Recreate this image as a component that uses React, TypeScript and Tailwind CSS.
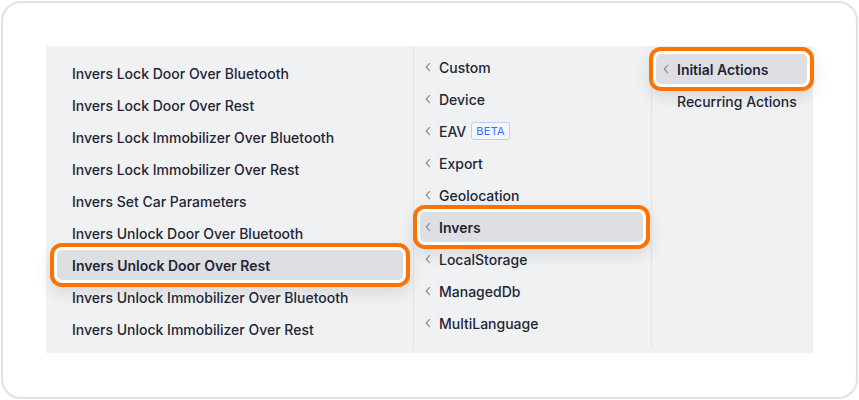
import React from "react";

const ring =
  "bg-[#dedfe3] font-semibold shadow-[0_0_0_3px_#ffffff,0_0_0_7px_#ff7200,0_6px_16px_7px_rgba(0,0,0,0.10)]";

const actions = [
  "Invers Lock Door Over Bluetooth",
  "Invers Lock Door Over Rest",
  "Invers Lock Immobilizer Over Bluetooth",
  "Invers Lock Immobilizer Over Rest",
  "Invers Set Car Parameters",
  "Invers Unlock Door Over Bluetooth",
  "Invers Unlock Door Over Rest",
  "Invers Unlock Immobilizer Over Bluetooth",
  "Invers Unlock Immobilizer Over Rest",
];

const groups = [
  "Custom",
  "Device",
  "EAV",
  "Export",
  "Geolocation",
  "Invers",
  "LocalStorage",
  "ManagedDb",
  "MultiLanguage",
];

function Chevron() {
  return (
    <svg width="6" height="10" viewBox="0 0 6 10" className="shrink-0">
      <polyline
        points="4.6,1.4 1.3,5 4.6,8.6"
        fill="none"
        stroke="#8d9198"
        strokeWidth="1.3"
        strokeLinecap="round"
        strokeLinejoin="round"
      />
    </svg>
  );
}

export default function App() {
  return (
    <div
      className="w-[859px] h-[400px] bg-white p-px"
      style={{ fontFamily: "Inter, 'Noto Sans', sans-serif" }}
    >
      <div className="w-[857px] h-[398px] rounded-[20px] border-2 border-[#dfe2e6] pl-[43px] pt-[43px]">
        <div className="flex w-[767px] h-[307px] bg-[#f0f1f3] text-[14px] font-medium text-[#1f2635]">
          <div className="w-[368px] flex flex-col gap-[2px] pt-[12px] border-r border-[#e1e3e7] my-[4px] -mt-0">
            {actions.map((a) => (
              <div
                key={a}
                className={`h-[30px] ml-[11px] mr-[10px] pl-[15px] flex items-center rounded-[5px] ${
                  a === "Invers Unlock Door Over Rest" ? ring : ""
                }`}
              >
                {a}
              </div>
            ))}
          </div>
          <div className="w-[238px] flex flex-col gap-[2px] pt-[2px] border-r border-[#e1e3e7] my-[4px]">
            {groups.map((g) => (
              <div
                key={g}
                className={`h-[30px] ml-[6px] mr-[8px] pl-[5px] flex items-center gap-[8px] rounded-[5px] ${
                  g === "Invers" ? ring : ""
                }`}
              >
                <Chevron />
                <span>{g}</span>
                {g === "EAV" && (
                  <span className="ml-[-3px] h-[18px] px-[4px] flex items-center rounded-[3px] border border-[#b9cefb] bg-[#f4f7ff] text-[11px] font-normal tracking-wide text-[#3d6df3]">
                    BETA
                  </span>
                )}
              </div>
            ))}
          </div>
          <div className="flex-1 flex flex-col gap-[2px] pt-[8px]">
            <div
              className={`h-[30px] ml-[4px] mr-[6px] pl-[7px] flex items-center gap-[8px] rounded-[5px] ${ring}`}
            >
              <Chevron />
              <span>Initial Actions</span>
            </div>
            <div className="h-[30px] ml-[4px] mr-[6px] pl-[21px] flex items-center">
              Recurring Actions
            </div>
          </div>
        </div>
      </div>
    </div>
  );
}
